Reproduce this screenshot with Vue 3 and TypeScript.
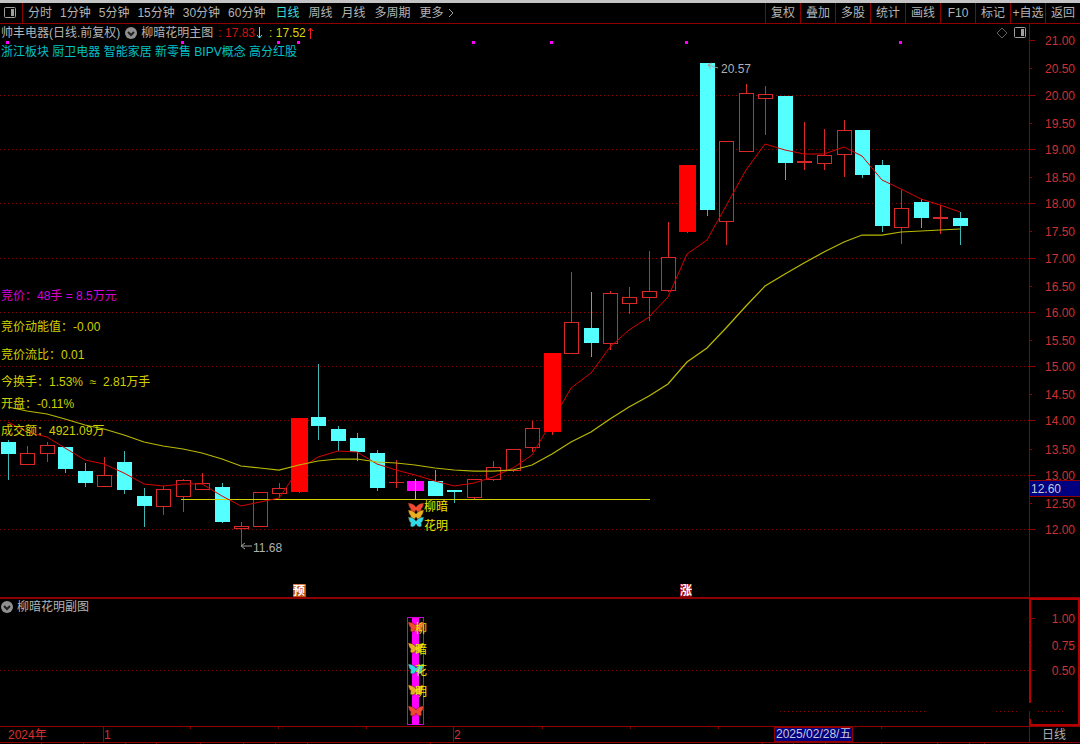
<script setup lang="ts">
type Kind = 'up' | 'down' | 'limit' | 'signal'
interface Candle { x: number; high: number; top: number; bottom: number; low: number; kind: Kind }
type Row = [number, number, number, number, number, Kind]

const minutePeriods: string[] = ['分时', '1分钟', '5分钟', '15分钟', '30分钟', '60分钟']
const longPeriods: string[] = ['日线', '周线', '月线', '多周期']
const tools: string[] = ['复权', '叠加', '多股', '统计', '画线', 'F10', '标记', '+自选', '返回']

const rows: Row[] = [
  [8, 440, 442, 454, 480, 'down'], [27, 446, 453, 464, 464, 'up'], [47, 442, 445, 453, 462, 'up'],
  [65, 447, 447, 469, 473, 'down'], [85, 463, 471, 483, 487, 'down'], [104, 457, 475, 486, 486, 'up'],
  [124, 451, 462, 490, 494, 'down'], [144, 488, 496, 506, 527, 'down'], [163, 486, 489, 506, 515, 'up'],
  [183, 479, 480, 496, 512, 'up'], [202, 473, 483, 489, 489, 'up'], [222, 483, 487, 522, 523, 'down'],
  [241, 522, 526, 528, 546, 'up'], [260, 492, 492, 526, 526, 'up'], [279, 483, 488, 493, 498, 'up'],
  [299, 418, 418, 492, 493, 'limit'], [318, 364, 417, 426, 440, 'down'], [338, 426, 429, 441, 451, 'down'],
  [357, 433, 438, 452, 461, 'down'], [377, 450, 453, 488, 491, 'down'], [396, 460, 482, 482, 488, 'up'],
  [415, 479, 481, 491, 499, 'signal'], [435, 470, 481, 496, 496, 'down'], [454, 490, 490, 492, 503, 'down'],
  [474, 479, 479, 497, 499, 'up'], [493, 461, 467, 479, 481, 'up'], [513, 449, 449, 470, 472, 'up'],
  [532, 421, 428, 447, 452, 'up'], [552, 353, 353, 432, 435, 'limit'], [571, 272, 322, 353, 354, 'up'],
  [591, 292, 328, 343, 357, 'down'], [610, 291, 293, 343, 350, 'up'], [629, 287, 297, 303, 314, 'up'],
  [649, 251, 291, 297, 321, 'up'], [668, 222, 257, 290, 292, 'up'], [687, 165, 165, 232, 233, 'limit'],
  [707, 63, 63, 210, 216, 'down'], [726, 141, 141, 221, 245, 'up'], [746, 84, 93, 151, 151, 'up'],
  [765, 86, 94, 98, 135, 'up'], [785, 96, 96, 163, 180, 'down'], [804, 122, 161, 162, 170, 'up'],
  [824, 129, 155, 163, 170, 'up'], [844, 120, 130, 154, 177, 'up'], [862, 130, 130, 175, 178, 'down'],
  [882, 160, 165, 226, 232, 'down'], [901, 190, 208, 227, 244, 'up'], [921, 199, 202, 218, 228, 'down'],
  [940, 205, 217, 218, 234, 'up'], [960, 212, 218, 226, 245, 'down'],
]
const candles: Candle[] = rows.map(([x, high, top, bottom, low, kind]) => ({ x, high, top, bottom, low, kind }))
const limitCandles = candles.filter((c) => c.kind === 'limit')
const plainCandles = candles.filter((c) => c.kind !== 'limit')

const shortAverage: number[] = [
  422, 432, 437, 448, 460, 464, 473, 484, 486, 484, 484, 496, 506, 502, 498, 469, 457, 451, 452, 464,
  470, 475, 481, 486, 483, 477, 468, 455, 421, 388, 373, 347, 330, 317, 297, 254, 240, 206, 170, 144,
  150, 154, 154, 147, 156, 180, 189, 199, 205, 212,
]
const longAverage: number[] = [
  407, 411, 414, 419, 425, 429, 435, 442, 446, 449, 453, 459, 466, 468, 470, 465, 461, 459, 459, 462,
  463, 465, 468, 470, 471, 471, 470, 465, 454, 442, 432, 419, 407, 396, 384, 362, 348, 328, 306, 286,
  274, 263, 252, 242, 235, 235, 232, 231, 230, 229,
]
const toPoints = (values: number[]): string => values.map((y, i) => `${candles[i].x},${y}`).join(' ')

interface Mark { label: string; y: number; major: boolean }
const prices: Mark[] = Array.from({ length: 19 }, (_, i) => {
  const price = 21 - i / 2
  const major = i % 2 === 0
  return { label: price.toFixed(2), y: Math.round(529 - (price - 12) * 54.3) + (major ? 0 : 1), major }
})
const gridLines = prices.filter((p) => p.major && p.label !== '21.00')
const levels: Mark[] = [
  { label: '1.00', y: 618, major: true },
  { label: '0.75', y: 645, major: false },
  { label: '0.50', y: 670, major: true },
]

const dots: number[] = [7, 182, 278, 298, 473, 551, 686, 900]
const notes = [
  { text: '竞价：48手 = 8.5万元', y: 300, pink: true },
  { text: '竞价动能值：-0.00', y: 331, pink: false },
  { text: '竞价流比：0.01', y: 359, pink: false },
  { text: '今换手：1.53%  ≈  2.81万手', y: 386, pink: false },
  { text: '开盘：-0.11%', y: 408, pink: false },
  { text: '成交额：4921.09万', y: 435, pink: false },
]
const mainWings = [
  { y: 508, c: '#f04a32' }, { y: 515, c: '#e8b020' }, { y: 522, c: '#30d8e8' },
]
const subWings = [
  { y: 627, c: '#f04a32', t: '柳' }, { y: 648, c: '#e8b020', t: '暗' }, { y: 669, c: '#30d8e8', t: '花' },
  { y: 690, c: '#e8b020', t: '明' }, { y: 711, c: '#f04a32', t: '' },
]
const wing = 'M0 -1 C-2 -4 -5 -5 -8 -5 C-7 -3 -7 0 -5 1 C-6 2 -6 5 -4 5 C-2 5 -1 4 0 2 C1 4 2 5 4 5 C6 5 6 2 5 1 C7 0 7 -3 8 -5 C5 -5 2 -4 0 -1 Z'
const upperTicks: number[] = [190, 278, 366, 542, 630, 718, 881]
const lowerTicks: number[] = [41, 83, 125, 156, 200, 243, 275, 307, 430, 762, 793, 825, 881, 937, 969, 984]
</script>

<template>
  <main class="terminal">
    <nav class="toolbar" aria-label="周期">
      <button class="panel-toggle" aria-label="侧栏">
        <svg width="12" height="12" viewBox="0 0 12 12"><rect x=".5" y=".5" width="11" height="10" rx="1" class="frame" /><rect x="7" y="2" width="3" height="7" class="pane" /></svg>
      </button>
      <div class="periods minutes">
        <button v-for="p in minutePeriods" :key="p">{{ p }}</button>
      </div>
      <div class="periods">
        <button v-for="p in longPeriods" :key="p" :class="{ active: p === '日线' }">{{ p }}</button>
        <button class="more">更多<svg width="6" height="10" viewBox="0 0 6 10"><path d="M1 1 L5 5 L1 9" class="frame" /></svg></button>
      </div>
      <div class="tools">
        <button v-for="t in tools" :key="t">{{ t }}</button>
      </div>
    </nav>

    <section class="chart">
      <svg class="canvas" viewBox="0 24 1080 574" role="img" aria-label="日线主图">
        <g class="crisp">
          <line v-for="g in gridLines" :key="g.label" x1="0" x2="1029" :y1="g.y + 0.5" :y2="g.y + 0.5" class="grid" />
          <rect v-for="d in dots" :key="d" :x="d - 1" y="41" width="3" height="3" class="magenta" />
          <g v-for="c in plainCandles" :key="c.x" :class="c.kind">
            <template v-if="c.kind === 'up'">
              <line v-if="c.high < c.top" :x1="c.x + 0.5" :x2="c.x + 0.5" :y1="c.high" :y2="c.top" />
              <line v-if="c.low > c.bottom" :x1="c.x + 0.5" :x2="c.x + 0.5" :y1="c.bottom" :y2="c.low" />
              <rect :x="c.x - 6.5" :y="c.top + 0.5" width="14" :height="Math.max(c.bottom - c.top, 0.1)" />
            </template>
            <template v-else>
              <line :x1="c.x + 0.5" :x2="c.x + 0.5" :y1="c.high" :y2="c.low" />
              <rect v-if="c.kind === 'down'" :x="c.x - 7" :y="c.top" width="15" :height="c.bottom - c.top" />
              <rect v-else :x="c.x - 8" :y="c.top" width="17" :height="c.bottom - c.top" />
              <line v-if="c.kind === 'signal'" :x1="c.x + 0.5" :x2="c.x + 0.5" :y1="c.high" :y2="c.low" />
            </template>
          </g>
          <line x1="181" x2="650" y1="499.5" y2="499.5" class="support" />
        </g>
        <polyline :points="toPoints(shortAverage)" class="short-average" />
        <g v-for="c in limitCandles" :key="c.x" class="limit crisp">
          <line :x1="c.x + 0.5" :x2="c.x + 0.5" :y1="c.high" :y2="c.low" />
          <rect :x="c.x - 8" :y="c.top" width="17" :height="c.bottom - c.top" />
        </g>
        <polyline :points="toPoints(longAverage)" class="long-average" />

        <path d="M718 68 L708 65 M712 63 L708 65 L711 69" class="pointer" />
        <text x="721" y="73" class="gray">20.57</text>
        <path d="M252 546 H241 M245 543 L241 546 L245 549" class="pointer" />
        <text x="253" y="552" class="gray">11.68</text>

        <text v-for="n in notes" :key="n.text" x="1" :y="n.y" :class="n.pink ? 'pink' : 'yellow'">{{ n.text }}</text>

        <path v-for="w in mainWings" :key="w.y" :d="wing" :fill="w.c" :transform="`translate(416 ${w.y})`" class="wing" />
        <text x="424" y="511" class="bright">柳暗</text>
        <text x="424" y="530" class="bright">花明</text>

        <rect x="293" y="584" width="13" height="13" class="warn" />
        <text x="299" y="595" class="badge">预</text>
        <rect x="680" y="584" width="12" height="13" class="rise" />
        <text x="686" y="595" class="badge">涨</text>

        <g class="crisp axis">
          <line x1="1029.5" x2="1029.5" y1="24" y2="598" />
          <line v-for="p in prices" :key="p.label" x1="1030" :x2="p.major ? 1035 : 1032" :y1="p.y + 0.5" :y2="p.y + 0.5" />
          <line x1="0" x2="1080" y1="597.5" y2="597.5" />
        </g>
        <text v-for="p in prices" :key="p.label" x="1075" :y="p.y + 5" class="scale">{{ p.label }}</text>
        <rect x="1029.5" y="480.5" width="51" height="16" class="cursor crisp" />
        <text x="1031" y="493" class="cursor-text">12.60</text>
      </svg>

      <header class="caption">
        <div class="title">
          <span>帅丰电器(日线.前复权)</span>
          <button class="fold" aria-label="主图指标">
            <svg width="12" height="12" viewBox="0 0 12 12"><circle cx="6" cy="6" r="6" class="disc" /><path d="M3 5 L6 8 L9 5" class="notch" /></svg>
          </button>
          <span>柳暗花明主图</span>
          <span class="value falling"><span>: 17.83</span><svg width="7" height="12" viewBox="0 0 7 12"><path d="M3.5 0 V11 M1 8 L3.5 11 L6 8" /></svg></span>
          <span class="value rising"><span>: 17.52</span><svg width="7" height="12" viewBox="0 0 7 12"><path d="M3.5 12 V1 M1 4 L3.5 1 L6 4" /></svg></span>
        </div>
        <div class="themes">浙江板块 厨卫电器 智能家居 新零售 BIPV概念 高分红股</div>
      </header>
      <div class="corner">
        <button aria-label="标记点"><svg width="12" height="12" viewBox="0 0 12 12"><path d="M6 1 L11 6 L6 11 L1 6 Z" class="frame dim" /></svg></button>
        <button aria-label="坐标栏"><svg width="12" height="12" viewBox="0 0 12 12"><rect x=".5" y=".5" width="11" height="10" rx="1" class="frame" /><rect x="7" y="2" width="3" height="7" class="pane" /></svg></button>
      </div>
    </section>

    <section class="chart">
      <svg class="canvas" viewBox="0 598 1080 128" role="img" aria-label="柳暗花明副图">
        <g class="crisp">
          <line x1="0" x2="1029" y1="670.5" y2="670.5" class="grid" />
          <path d="M780 711.5 H926 M996 711.5 H1020 M1038 711.5 H1064" class="grid" />
          <line x1="0" x2="1029" y1="598.5" y2="598.5" class="edge" />
          <rect x="407.5" y="617.5" width="16" height="107" class="column" />
          <rect x="412" y="618" width="7" height="107" class="magenta" />
        </g>
        <g v-for="w in subWings" :key="w.y">
          <path :d="wing" :fill="w.c" :transform="`translate(416 ${w.y})`" class="wing" />
          <text x="415" :y="w.y + 6" class="bright">{{ w.t }}</text>
        </g>
        <g class="crisp">
          <path d="M1030 703 V599 H1079 V725 H1030 V719" class="active-frame" />
          <path d="M1029.5 711 V719" class="edge" />
          <line v-for="l in levels" :key="l.label" x1="1030" :x2="l.major ? 1035 : 1032" :y1="l.y + 0.5" :y2="l.y + 0.5" class="edge" />
        </g>
        <text v-for="l in levels" :key="l.label" x="1075" :y="l.y + 5" class="scale">{{ l.label }}</text>
      </svg>
      <header class="caption">
        <div class="title sub">
          <button class="fold" aria-label="副图指标">
            <svg width="12" height="12" viewBox="0 0 12 12"><circle cx="6" cy="6" r="6" class="disc" /><path d="M3 5 L6 8 L9 5" class="notch" /></svg>
          </button>
          <span>柳暗花明副图</span>
        </div>
      </header>
    </section>

    <svg class="canvas" viewBox="0 726 1080 18" role="img" aria-label="时间轴">
      <g class="crisp axis">
        <path d="M0 726.5 H1080 M0 742.5 H1080 M103.5 726 V742 M453.5 726 V742 M1029.5 726 V742" />
        <line v-for="t in upperTicks" :key="t" :x1="t + 0.5" :x2="t + 0.5" y1="727" y2="729" />
        <line v-for="t in lowerTicks" :key="t" :x1="t + 0.5" :x2="t + 0.5" y1="742" y2="744" />
      </g>
      <text x="8" y="739" class="month">2024年</text>
      <text x="104" y="739" class="month">1</text>
      <text x="454" y="739" class="month">2</text>
      <rect x="774.5" y="727.5" width="78" height="14" class="cursor crisp" />
      <text x="776" y="738" class="cursor-text">2025/02/28/五</text>
      <text x="1042" y="739" class="gray">日线</text>
    </svg>
  </main>
</template>

<style>
body { margin: 0; background: #000; }
</style>

<style scoped>
.terminal {
  min-height: 100vh;
  background: #000;
  color: #b4b4b4;
  font: 12px/16px "Liberation Sans", "Noto Sans CJK SC", sans-serif;
}
button {
  margin: 0;
  padding: 0;
  border: 0;
  background: none;
  color: inherit;
  font: inherit;
  white-space: nowrap;
  cursor: pointer;
}
svg { display: block; fill: none; }
.toolbar {
  display: flex;
  box-sizing: border-box;
  height: 24px;
  border-top: 3px solid #c4c4c4;
  border-bottom: 1px solid #900000;
}
.panel-toggle {
  display: flex;
  box-sizing: border-box;
  align-items: center;
  width: 23px;
  padding-left: 4px;
  border-right: 1px solid #900000;
}
.periods { display: flex; align-items: center; gap: 9px; }
.minutes { gap: 8px; margin: 0 10px 0 5px; }
.active { color: #40d8d8; }
.more { display: flex; align-items: center; gap: 4px; }
.tools { display: flex; margin-left: auto; }
.tools button { box-sizing: border-box; width: 35px; border-left: 1px solid #900000; }
.frame { fill: none; stroke: #a0a0a0; }
.frame.dim { stroke: #606060; }
.pane { fill: #a0a0a0; }

.chart { position: relative; }
.canvas { width: 100%; height: auto; }
.canvas text { white-space: pre; }
.crisp { shape-rendering: crispEdges; }
.grid { stroke: #900000; stroke-dasharray: 1 3; }
.magenta { fill: #f0f; }
.up line { stroke: #d82828; }
.up rect { stroke: #d82828; fill: #000; }
.down line { stroke: #40b8b8; }
.down rect { fill: #54ffff; }
.limit line { stroke: #d82828; }
.limit rect { fill: #f00; }
.signal line { stroke: #c8c800; }
.signal rect { fill: #f0f; }
.support { stroke: #d0d000; }
.long-average { stroke: #b8b800; stroke-width: 1.25; }
.short-average { stroke: #d80000; }
.pointer { stroke: #a0a0a0; }
.gray { fill: #b0b0b0; }
.pink { fill: #d800d8; }
.yellow { fill: #d0d000; }
.bright { fill: #e8e800; }
.warn { fill: #c04c10; }
.rise { fill: #900000; }
.badge { fill: #fff; font-size: 12px; font-weight: 700; text-anchor: middle; }
.wing { stroke: #401808; stroke-width: 0.5; }
.axis { stroke: #900000; }
.edge { stroke: #900000; }
.scale { fill: #d03030; text-anchor: end; }
.month { fill: #d83030; }
.cursor { fill: #000080; stroke: #900000; }
.cursor-text { fill: #c8c8d8; }
.column { stroke: #d000d0; }
.active-frame { stroke: #b80000; stroke-width: 2; }

.caption { position: absolute; top: 1px; left: 1px; }
.title { display: flex; align-items: center; height: 16px; }
.fold { margin: 0 4px 0 5px; }
.sub .fold { margin-left: 0; }
.disc { fill: #909090; }
.notch { stroke: #202020; stroke-width: 2; }
.value { display: flex; align-items: center; gap: 1px; margin-left: 5px; }
.rising { margin-left: 6px; }
.falling { color: #d81010; }
.rising { color: #d8d800; }
.falling path { stroke: #54e8e8; }
.rising path { stroke: #f02020; }
.themes { margin-top: 3px; color: #00c0c8; }
.corner { position: absolute; top: 3px; right: 54px; display: flex; gap: 6px; }
</style>
